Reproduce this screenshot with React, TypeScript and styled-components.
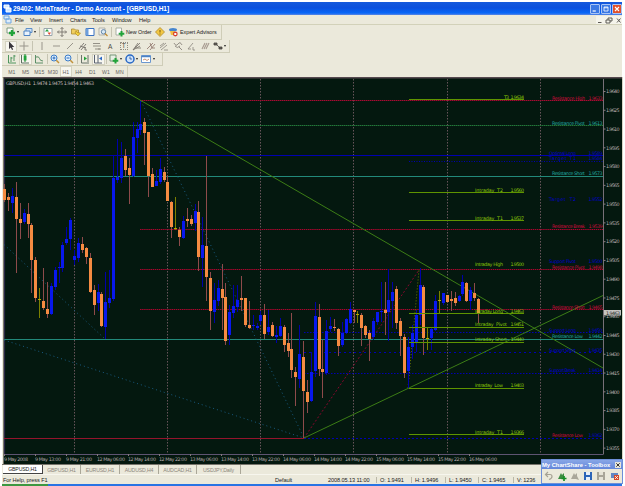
import React from 'react'
import { createGlobalStyle, styled } from 'styled-components';

type Candle = [number, number, number, number, number, 'u' | 'd' | 'y'];

// x, high, body top, body bottom, low, kind
const candles: Candle[] = [
    [4.5, 184, 189, 200, 202, 'd'], [8.5, 193, 197, 200, 211, 'd'], [12.5, 188, 196, 203, 213, 'u'], [16.5, 182, 197, 219, 273, 'd'],
    [20.5, 203, 219, 223, 239, 'd'], [24, 209, 213, 222, 224, 'u'], [28, 203, 214, 224, 238, 'd'], [31.5, 223, 225, 260, 293, 'd'],
    [35.5, 257, 260, 298, 302, 'd'], [39.5, 288, 299, 300, 318, 'y'], [43.5, 268, 301, 308, 310, 'd'], [47.5, 282, 309, 314, 318, 'd'],
    [51, 283, 286, 314, 315, 'u'], [55, 267, 270, 287, 290, 'u'], [59, 262, 267, 268, 283, 'u'], [62.5, 242, 245, 268, 272, 'u'],
    [66.5, 227, 239, 243, 245, 'u'], [70.5, 218, 220, 239, 250, 'u'], [74.5, 250, 256, 260, 265, 'u'], [78.5, 238, 243, 258, 262, 'u'],
    [82.5, 237, 244, 250, 253, 'd'], [86.5, 247, 248, 257, 264, 'd'], [90, 253, 258, 292, 293, 'd'], [94, 285, 290, 305, 315, 'd'],
    [98, 284, 292, 303, 311, 'u'], [101.5, 292, 294, 326, 327, 'd'], [105.5, 272, 302, 327, 339, 'u'], [109.5, 270, 298, 303, 308, 'u'],
    [113.5, 155, 178, 299, 301, 'u'], [117, 139, 177, 180, 183, 'u'], [121, 142, 158, 178, 183, 'u'], [125, 149, 156, 170, 176, 'd'],
    [129, 158, 168, 175, 204, 'd'], [133, 122, 137, 176, 177, 'u'], [137, 122, 129, 138, 153, 'u'], [140.5, 101, 124, 130, 135, 'u'],
    [144.5, 118, 122, 133, 165, 'd'], [148.5, 132, 132, 176, 197, 'd'], [152.5, 168, 174, 187, 187, 'd'], [156, 170, 181, 186, 186, 'u'],
    [160, 158, 169, 182, 184, 'u'], [164, 167, 172, 180, 182, 'd'], [167.5, 175, 182, 201, 201, 'd'], [171.5, 201, 202, 227, 238, 'd'],
    [175.5, 197, 228, 229, 230, 'y'], [179.5, 227, 230, 237, 246, 'd'], [183, 216, 221, 238, 239, 'u'], [187, 208, 219, 221, 227, 'd'],
    [191, 215, 219, 224, 226, 'd'], [195, 204, 211, 223, 231, 'u'], [198.5, 201, 212, 257, 271, 'd'], [202.5, 217, 245, 258, 287, 'u'],
    [206.5, 156, 246, 277, 301, 'd'], [210.5, 272, 278, 311, 330, 'd'], [214, 283, 300, 312, 323, 'u'], [218, 280, 288, 301, 306, 'u'],
    [222, 264, 289, 298, 330, 'd'], [225.5, 283, 297, 341, 345, 'd'], [229.5, 305, 312, 335, 345, 'u'], [233.5, 285, 306, 313, 318, 'u'],
    [237.5, 285, 300, 307, 312, 'u'], [241.5, 276, 298, 300, 311, 'd'], [245.5, 298, 298, 325, 327, 'd'], [249, 301, 325, 328, 329, 'd'],
    [253, 315, 325, 326, 330, 'u'], [257, 323, 326, 328, 330, 'u'], [260.5, 311, 315, 321, 325, 'u'], [264.5, 304, 315, 334, 339, 'd'],
    [268.5, 310, 327, 332, 335, 'u'], [272.5, 322, 325, 336, 337, 'd'], [276, 326, 335, 337, 343, 'u'], [280, 318, 326, 336, 337, 'u'],
    [284, 325, 327, 345, 352, 'd'], [288, 333, 343, 351, 357, 'd'], [291.5, 313, 349, 370, 378, 'd'], [295.5, 367, 372, 377, 406, 'd'],
    [299.5, 325, 354, 379, 388, 'u'], [303.5, 341, 357, 391, 438, 'd'], [307.5, 380, 392, 402, 413, 'd'], [311, 352, 372, 401, 402, 'u'],
    [315, 302, 316, 371, 377, 'u'], [319, 304, 317, 369, 376, 'd'], [322.5, 340, 369, 372, 398, 'd'], [326.5, 320, 331, 373, 375, 'u'],
    [330.5, 317, 326, 329, 332, 'u'], [334.5, 319, 327, 328, 331, 'd'], [338.5, 328, 329, 346, 356, 'd'], [342.5, 322, 333, 345, 347, 'u'],
    [346, 318, 319, 333, 334, 'u'], [350, 302, 309, 323, 324, 'u'], [354, 310, 310, 312, 323, 'd'], [357.5, 311, 314, 315, 323, 'y'],
    [361.5, 313, 315, 328, 346, 'd'], [365.5, 325, 326, 335, 338, 'd'], [369.5, 330, 333, 339, 361, 'd'], [373.5, 318, 321, 337, 340, 'u'],
    [377.5, 312, 312, 322, 325, 'u'], [381.5, 282, 311, 312, 322, 'u'], [385, 282, 310, 313, 335, 'd'], [388.5, 269, 300, 312, 341, 'u'],
    [392.5, 282, 292, 301, 328, 'u'], [396.5, 286, 289, 323, 329, 'd'], [400.5, 318, 321, 336, 356, 'd'], [404.5, 334, 337, 373, 378, 'd'],
    [408.5, 337, 347, 371, 388, 'u'], [412.5, 325, 333, 347, 359, 'u'], [416.5, 310, 315, 342, 352, 'u'], [420, 268, 285, 315, 325, 'u'],
    [423.5, 285, 287, 338, 355, 'd'], [427.5, 327, 338, 339, 350, 'y'], [431.5, 328, 329, 338, 350, 'u'], [435.5, 295, 301, 330, 331, 'u'],
    [439.5, 291, 300, 301, 313, 'y'], [443, 293, 293, 303, 305, 'u'], [447, 295, 295, 302, 303, 'd'], [451, 291, 299, 301, 311, 'd'],
    [455, 292, 298, 303, 306, 'd'], [459, 295, 296, 301, 302, 'u'], [462.5, 275, 282, 294, 296, 'u'], [466.5, 282, 283, 301, 302, 'd'],
    [470.5, 287, 290, 301, 310, 'u'], [474.5, 283, 293, 298, 301, 'd'], [478.5, 298, 299, 314, 323, 'd'],
];

const wickColor = { u: '#0000a8', d: '#8e4b4b', y: '#7c8000' };
const bodyColor = { u: '#0818ee', d: '#f58b42', y: '#b8a800' };

const gridX = [74.5, 167.5, 260.5, 353.5, 447.5, 540.5];

// y, x start, colour, dash
const levels: [number, number, string, string][] = [
    [100.5, 140, '#a80a32', '1.5 .5'],
    [125.5, 4, '#23783a', '1.5 .5'],
    [155.5, 4, '#0000b0', ''],
    [161.5, 409, '#0000b4', '1 1.5'],
    [176.5, 4, '#22897a', ''],
    [229.5, 140, '#a8062e', '1.5 .6'],
    [269.5, 140, '#a8062e', '1.5 .6'],
    [309.5, 140, '#a8062e', '1.5 .6'],
    [332.5, 304, '#0000b4', '1.5 1.5'],
    [339.5, 4, '#22897a', ''],
    [352.5, 304, '#0000b4', '2 3'],
    [373.5, 304, '#0000b4', '1.5 1.5'],
    [438.5, 304, '#0000b4', '2 2'],
];

const intraday: [string, string, number, number][] = [
    ['T3', '1.9634', 99, 99.5],
    ['Intraday  T2', '1.9560', 191.5, 192.5],
    ['Intraday  T1', '1.9537', 220, 220.5],
    ['Intraday High', '1.9500', 266, 0],
    ['Intraday Long', '1.9463', 312.6, 313.5],
    ['Intraday  Pivot', '1.9451', 326.4, 327.5],
    ['Intraday Short', '1.9440', 341, 342.5],
    ['Intraday  Low', '1.9403', 387.3, 388.5],
    ['Intraday  T1', '1.9366', 433.6, 434.5],
];

const RED = '#c80a3a';
const TEAL = '#20a6a0';
const BLUE = '#0000c8';

const notes: [string, string, number, string][] = [
    ['Optimal Long', '1.9589', 154.6, BLUE],
    ['Target T1', '1.9584', 160.3, BLUE],
    ['Target  T2', '1.9552', 201, BLUE],
    ['Support Pivot', '1.9500', 263, BLUE],
    ['Support Long', '1.9450', 332, BLUE],
    ['Support Short', '1.9435', 352, BLUE],
    ['Support Break', '1.9414', 372.3, BLUE],
    ['', '1.9362', 437.3, BLUE],
    ['Resistance High', '1.9633', 99.8, RED],
    ['Resistance Pivot', '1.9613', 125, TEAL],
    ['Resistance Short', '1.9573', 175.3, TEAL],
    ['Resistance Break', '1.9539', 228.4, RED],
    ['Resistance Pivot', '1.9498', 268.5, RED],
    ['Resistance Short', '1.9465', 308.6, RED],
    ['Resistance Low', '1.9442', 338, TEAL],
    ['Resistance Low', '', 437, RED],
];

const dates = ['9 May 2008', '9 May 13:00', '9 May 21:00', '12 May 06:00', '12 May 14:00', '12 May 22:00', '13 May 06:00', '13 May 14:00',
    '13 May 22:00', '14 May 06:00', '14 May 14:00', '14 May 22:00', '15 May 06:00', '15 May 14:00', '15 May 22:00', '16 May 06:00'];

const prices = Array.from({ length: 20 }, (_, i) => ({ y: 91.5 + i * 18.77, text: (1.964 - i * 0.0015).toFixed(4) }));

const Chart = () => (
    <ChartSvg viewBox="3 77 620 387" width="620" height="387">
        <rect x="3" y="77" width="620" height="387" fill="#04180f" />
        <path d="M3 77.5H622" stroke="#55494f" strokeWidth="2" />
        <path d="M3.5 77V464" stroke="#77756b" />
        <path d="M4.6 79V454" stroke="#302c4e" />
        <path d="M622.5 77V464" stroke="#d8d6c6" />
        {gridX.map(x => <path key={x} d={`M${x} 79V454`} stroke="#67545a" strokeDasharray="1.5 1.5" />)}
        {levels.map(([y, x, color, dash]) => (
            <path key={y} d={`M${x} ${y}H603`} stroke={color} strokeDasharray={dash || undefined} />
        ))}
        <path d="M4 438.5H304" stroke="#94142c" />
        <path d="M4 244.5L105 339M4 340L304 438M141 101L304 438" stroke="#185a80" strokeDasharray="1 3" fill="none" />
        <path d="M304 438L419 270" stroke="#84082c" strokeDasharray="2 2" />
        <path d="M408 388L419 270" stroke="#6c7a00" strokeDasharray="1 2" />
        <path d="M102 78L603 368M304 438L603 295.5" stroke="#3c7d16" fill="none" />
        {candles.map(([x, high, top, bottom, low, kind]) => {
            const left = Math.floor(x);
            return (
                <g key={x} shapeRendering="crispEdges">
                    <rect x={left} y={high} width="1" height={low - high} fill={wickColor[kind]} />
                    <rect x={left - 1} y={top} width="3" height={Math.max(1, bottom - top)} fill={bodyColor[kind]} />
                </g>
            );
        })}
        {intraday.map(([name, value, y, line]) => (
            <g key={y}>
                {line > 0 && <path d={`M409 ${line}H524`} stroke="#5f9400" />}
                <ChartText x={name === 'T3' ? 504 : 475} y={y} $color="#8cc808" textLength={name === 'T3' ? 5 : name.length > 13 ? 32 : 28}>{name}</ChartText>
                <ChartText x="510.5" y={y} $color="#8cc808" textLength="13.5">{value}</ChartText>
            </g>
        ))}
        {notes.map(([name, value, y, color]) => (
            <g key={y}>
                {name && <ChartText x={color === BLUE ? 549 : 552} y={y} $color={color} textLength={color === BLUE ? 27 : name.length > 14 ? 33 : 31}>{name}</ChartText>}
                {value && <ChartText x="588.5" y={y} $color={color} textLength="14">{value}</ChartText>}
            </g>
        ))}
        <path d="M603.5 79V454.5" stroke="#777078" />
        <path d="M4 454.5H603" stroke="#5e5472" />
        {prices.map(({ y, text }) => (
            <g key={text}>
                <path d={`M603 ${y}h2.5`} stroke="#85797c" />
                <ChartText x="606" y={y + 1.7} $color="#bdb2b2" textLength="13.5">{text}</ChartText>
            </g>
        ))}
        <rect x="604" y="310" width="17" height="5.5" fill="#c6c4c0" />
        <ChartText x="606" y="314.5" $color="#201c1c" textLength="14">1.9463</ChartText>
        {dates.map((date, i) => (
            <g key={date}>
                <path d={`M${4.5 + i * 31} 454v2`} stroke="#85797c" />
                <ChartText x={4 + i * 31} y="461" $color="#b4aaaa" textLength={i === 0 ? 24 : i < 3 ? 26 : 28}>{date}</ChartText>
            </g>
        ))}
        <ChartText x="6" y="84.5" $color="#c4babc" textLength="88">GBPUSD,H1  1.9474 1.9475 1.9454 1.9463</ChartText>
    </ChartSvg>
);

const art: Record<string, React.ReactNode> = {
    newChart: <><path d="M1 1h6v5H1z" fill="#fff" stroke="#7c9a80" /><path d="M6 3v6M3 6h6" stroke="#22a33a" strokeWidth="2.4" /></>,
    profiles: <><path d="M3 1.5h6v4H3z" fill="#cfe1f5" stroke="#5f90c8" /><path d="M1 4h6v4.5H1z" fill="#e8f2fc" stroke="#4d83c4" /></>,
    market: <><path d="M1 1.5h8v7H1z" fill="#fff" stroke="#9aa6ac" /><path d="M2 4.5l2-2.5 2 2.5z" fill="#2aa040" /><path d="M4.5 5.5H8L6.300 8z" fill="#e04c30" /></>,
    move: <path d="M5 .5v9M.5 5h9M3.5 2L5 .5 6.5 2M3.5 8L5 9.5 6.5 8M2 3.5L.5 5 2 6.5M8 3.5L9.5 5 8 6.5" stroke="#77736b" strokeWidth=".9" fill="none" />,
    folder: <><path d="M.5 2h3l1 1h3v4h-7z" fill="#f0cf60" stroke="#ac8a30" strokeWidth=".8" /><path d="M5 4l1.2 1.5L9.5 6 7 9 4 6z" fill="#f4d33c" stroke="#a88120" strokeWidth=".6" /></>,
    terminal: <><path d="M1 1.5h8v7H1z" fill="#fff" stroke="#3871c2" /><path d="M1 1.5h2.5v7H1z" fill="#6d9edb" /></>,
    tester: <><path d="M1 1h6v7H1z" fill="#eee" stroke="#a5a49c" strokeWidth=".8" /><circle cx="5.5" cy="4.8" r="2.2" fill="#d7e8f6" stroke="#6488a8" /><path d="M7 6.5L9.5 9" stroke="#c48b30" strokeWidth="1.2" /></>,
    order: <><path d="M1 1h5.5v7H1z" fill="#fff" stroke="#979f93" strokeWidth=".8" /><path d="M6.5 4v5.5M3.7 6.8h5.6" stroke="#22a33a" strokeWidth="2" /></>,
    meta: <><path d="M5 .5L9.5 5 5 9.5.5 5z" fill="#f3c843" stroke="#b08a2c" strokeWidth=".8" /><path d="M5 3v2.5M5 6.5v1" stroke="#775708" /></>,
    expert: <><ellipse cx="5" cy="2.7" rx="4" ry="1.7" fill="#4585cf" /><path d="M2 4h5l-1 4H3z" fill="#f1bf45" /><circle cx="7.3" cy="7" r="2.4" fill="#d8402c" /><path d="M6.3 6h2v2h-2z" fill="#fff" /></>,
    cursor: <path d="M3 .5v7.5l1.8-1.6L6 9l1.2-.6L6 6h2.3z" fill="#39363c" />,
    cross: <path d="M5 .5v9M.5 5h9" stroke="#99958b" />,
    vline: <path d="M5 1v8" stroke="#99958b" />,
    hline: <path d="M1 5h7" stroke="#99958b" />,
    trend: <path d="M2 8L8 2" stroke="#99958b" />,
    channel: <path d="M1 8l5-6M3 9l5-6M2 5l6 2M7 6v3h2" stroke="#76726c" strokeWidth=".9" fill="none" />,
    fibo: <path d="M1 2.5h7M1 5h8M3 8h6M7 7v2" stroke="#8a867c" strokeWidth=".9" />,
    fan: <path d="M1 9L8 2M1 9l7-4M1 9l5-7M4 7h5" stroke="#807b73" strokeWidth=".9" />,
    pitch: <path d="M1 8l6-6M4 9l5-6M4 2l2 5h3" stroke="#8b6f66" strokeWidth=".8" fill="none" />,
    lines: <path d="M1 5l4-3M1 7l6-5M2 9l6-5M5 9h4" stroke="#8a857d" strokeWidth=".8" />,
    arcs: <path d="M1 2q2 4 4 1t4 1M2 5q2 3 5 0M6 6l3 3" stroke="#8a857d" strokeWidth=".9" fill="none" />,
    angle: <path d="M2 8l5-6M2 8h3M7 6v3h2" stroke="#8a857d" strokeWidth=".8" fill="none" />,
    para: <path d="M2 8l3-6M4 8l3-6M6 8l3-6" stroke="#a69a8f" strokeWidth="1.1" />,
    arrows: <path d="M1 2h3v2H1zM4 4l3 3M6 6h3v2H6z" stroke="#45413d" strokeWidth=".8" fill="#66615c" />,
    bars: <path d="M1.5 1v8H9M4 3v5M4 4h1.5M7 1v6M7 2h1.5" stroke="#3c8d50" strokeWidth=".9" fill="none" />,
    candle: <><path d="M1.5 1v8H9" stroke="#5c7260" fill="none" /><path d="M5 0v8" stroke="#1d8a34" /><path d="M3.7 1.5h2.8v5H3.7z" fill="#22a33a" /></>,
    lineChart: <path d="M1.5 1v8H9M2 3q3-1 3.5 1.5T9 7" stroke="#4b8559" strokeWidth=".9" fill="none" />,
    zoomIn: <><circle cx="4" cy="4" r="3" fill="#dceeff" stroke="#3a7cc8" /><path d="M2.5 4h3M4 2.5v3" stroke="#2869b8" /><path d="M6.3 6.3L9 9" stroke="#c0913a" strokeWidth="1.5" /></>,
    zoomOut: <><circle cx="4" cy="4" r="3" fill="#dceeff" stroke="#3a7cc8" /><path d="M2.5 4h3" stroke="#2869b8" /><path d="M6.3 6.3L9 9" stroke="#c0913a" strokeWidth="1.5" /></>,
    scroll: <><path d="M1.5 1v8H9M8 1v7" stroke="#69756b" fill="none" /><path d="M4 2.5L7 4.5 4 6.5z" fill="#22a33a" /></>,
    shift: <><path d="M1.5 1v8H9M5 1v8" stroke="#58606f" fill="none" /><path d="M9 2.5L6 4.5 9 6.5z" fill="#2d69c4" /></>,
    indicators: <><path d="M1 1h6v6H1z" fill="#e8f0e4" stroke="#779578" /><path d="M6.5 4v5.5M3.7 6.8h5.6" stroke="#22a33a" strokeWidth="2" /></>,
    clock: <><circle cx="5" cy="5" r="4" fill="#cfe3fa" stroke="#2868c4" strokeWidth="1.5" /><path d="M5 2.5V5h2" stroke="#214e94" fill="none" strokeWidth=".8" /></>,
    template: <><path d="M.5 1.5h9v7h-9z" fill="#fff" stroke="#6b97cf" /><path d="M.5 2.5h9" stroke="#4d83c4" strokeWidth="1.5" /><path d="M2 6l2-1 2 1.5L8 5" stroke="#bc7850" strokeWidth=".8" fill="none" /></>,
    undo: <path d="M2 3.5h4q2 0 2 2T5 8.5M4 1L1.5 3.5 4 6" stroke="#a6a294" strokeWidth="1.2" fill="none" />,
    share: <><path d="M1 8L4 2l1 2 2-2v6z" fill="#3d8d42" /><path d="M7 5v5M4.5 7.5h5" stroke="#178e27" strokeWidth="1.7" /></>,
    shareOff: <path d="M1 8L4 2l1 2 2-2v3l2 4-3-1z" fill="#aaa79a" />,
    save: <><path d="M1 1h8v8H1z" fill="#2c65b8" /><path d="M3 1h4v3H3zM3 6h4v3H3z" fill="#e8f0fa" /></>,
    saveOff: <><path d="M1 1h8v8H1z" fill="#a8a598" /><path d="M3 1h4v3H3zM3 6h4v3H3z" fill="#e5e3d6" /></>,
    remove: <><path d="M1 2h7v5H1z" fill="#6288c4" /><path d="M4 4h5v5H4z" fill="#d64b2c" /><path d="M5 5l3 3M8 5L5 8" stroke="#fff" strokeWidth=".8" /></>,
};

const Icon = ({ name }: { name: string }) => <svg width="10" height="10" viewBox="0 0 10 10">{art[name]}</svg>;

const Tool = ({ icon, w = 13.5, pressed }: { icon: string; w?: number; pressed?: boolean }) => (
    <Slot $w={w} $pressed={pressed}><Icon name={icon} /></Slot>
);

const App = () => (
    <Window>
        <GlobalStyle />
        <TitleBar>
            <AppIcon viewBox="0 0 9 9"><path d="M1 1h5v3H1zM3 4h5v4H3z" fill="#cfe6ff" stroke="#fff" /></AppIcon>
            <TitleText>29402: MetaTrader - Demo Account - [GBPUSD,H1]</TitleText>
            <WindowButton><svg viewBox="0 0 10 10"><path d="M2 7.5h4" stroke="#fff" strokeWidth="1.5" /></svg></WindowButton>
            <WindowButton><svg viewBox="0 0 10 10"><path d="M2.5 2.5h5v5h-5zM2.5 3.5h5" stroke="#fff" fill="none" /></svg></WindowButton>
            <WindowButton $close><svg viewBox="0 0 10 10"><path d="M2.5 2.5l5 5M7.5 2.5l-5 5" stroke="#fff" strokeWidth="1.4" /></svg></WindowButton>
        </TitleBar>
        <MenuBar>
            <AppIcon viewBox="0 0 9 9"><path d="M1 1h5v3H1zM3 4h5v4H3z" fill="#dfedfa" stroke="#6fa5df" /></AppIcon>
            <MenuItem $w={15}>File</MenuItem>
            <MenuItem $w={19}>View</MenuItem>
            <MenuItem $w={21}>Insert</MenuItem>
            <MenuItem $w={22}>Charts</MenuItem>
            <MenuItem $w={20}>Tools</MenuItem>
            <MenuItem $w={27}>Window</MenuItem>
            <MenuItem $w={20}>Help</MenuItem>
            <ChildControls viewBox="0 0 26 8">
                <path d="M2 6.5h3.5M10 4h4v3h-4zM12 4V2h4v3h-2M21 2.5l3.500 4M24.500 2.5l-3.500 4" stroke="#5d5a55" fill="none" />
            </ChildControls>
        </MenuBar>
        <ToolRow $h={15} $w={220}>
            <Tool icon="newChart" w={12} /><Caret />
            <Tool icon="profiles" w={13} /><Caret />
            <Divider />
            <Tool icon="market" w={14} />
            <Tool icon="move" w={14} />
            <Tool icon="folder" w={14} />
            <Tool icon="terminal" w={13} />
            <Tool icon="tester" w={14} />
            <Divider />
            <Tool icon="order" w={13} />
            <Label $w={28}>New Order</Label>
            <Tool icon="meta" w={12} />
            <Tool icon="expert" w={14} />
            <Label $w={38}>Expert Advisors</Label>
        </ToolRow>
        <ToolRow $h={13} $w={228}>
            <Tool icon="cursor" w={12} pressed />
            <Tool icon="cross" w={14} />
            <Divider />
            <Tool icon="vline" w={16} />
            <Tool icon="hline" w={13} />
            <Tool icon="trend" />
            <Tool icon="channel" />
            <Tool icon="fibo" />
            <Slot $w={13.5} $dark>A</Slot>
            <Slot $w={13.5} $dark><Boxed>T</Boxed></Slot>
            <Tool icon="fan" />
            <Tool icon="pitch" />
            <Tool icon="lines" />
            <Tool icon="arcs" />
            <Tool icon="angle" />
            <Tool icon="para" />
            <Tool icon="arrows" w={12} /><Caret />
        </ToolRow>
        <ToolRow $h={13} $w={161}>
            <Tool icon="bars" />
            <Tool icon="candle" w={13} pressed />
            <Tool icon="lineChart" w={14} />
            <Divider />
            <Tool icon="zoomIn" w={13} />
            <Tool icon="zoomOut" w={14} />
            <Divider />
            <Tool icon="scroll" w={13} />
            <Tool icon="shift" w={13} pressed />
            <Divider />
            <Tool icon="indicators" w={12} /><Caret />
            <Tool icon="clock" w={12} /><Caret />
            <Tool icon="template" w={13} /><Caret />
        </ToolRow>
        <ToolRow $h={12} $w={126}>
            {['M1', 'M5', 'M15', 'M30', 'H1', 'H4', 'D1', 'W1', 'MN'].map(period => (
                <Slot key={period} $w={period === 'H1' ? 12 : 13.7} $pressed={period === 'H1'}>{period}</Slot>
            ))}
        </ToolRow>
        <Chart />
        <Tabs>
            <Tab $w={40} $active>GBPUSD,H1</Tab>
            <Tab $w={38}>GBPUSD,H1</Tab>
            <Tab $w={39}>EURUSD,H1</Tab>
            <Tab $w={39}>AUDUSD,H4</Tab>
            <Tab $w={38}>AUDCAD,H1</Tab>
            <Tab $w={44}>USDJPY,Daily</Tab>
        </Tabs>
        <StatusBar>
            <StatusItem $w={272}>For Help, press F1</StatusItem>
            <StatusItem $w={53}>Default</StatusItem>
            <StatusItem $w={49}>2008.05.13 11:00</StatusItem>
            <StatusItem $w={35} $line>O: 1.9491</StatusItem>
            <StatusItem $w={34} $line>H: 1.9496</StatusItem>
            <StatusItem $w={33} $line>L: 1.9450</StatusItem>
            <StatusItem $w={35} $line>C: 1.9465</StatusItem>
            <StatusItem $w={30} $line>V: 1236</StatusItem>
        </StatusBar>
        <Taskbar />
        <Toolbox>
            <ToolboxTitle>
                <span>My ChartShare - Toolbox</span>
                <svg width="6" height="6" viewBox="0 0 6 6"><path d="M0 0h6v6H0z" fill="#e8e6da" /><path d="M1.3 1.3l3.4 3.4M4.7 1.3L1.3 4.7" stroke="#333" /></svg>
            </ToolboxTitle>
            <ToolboxBody>
                {['undo', 'share', 'shareOff', 'save', 'saveOff', 'remove'].map(name => <Tool key={name} icon={name} w={13.2} />)}
            </ToolboxBody>
        </Toolbox>
    </Window>
);

const GlobalStyle = createGlobalStyle`
    body {
        margin: 0;
        background: #fff;
        overflow: hidden;
    }

    * {
        box-sizing: border-box;
    }
`;

const Window = styled.div`
    position: relative;
    width: 625px;
    height: 486px;
    padding: 2px 2px 0 2px;
    display: flex;
    flex-direction: column;
    background: linear-gradient(#ebe9db, #ebe9db) 2px 2px / 620px 484px no-repeat #fff;
    font-family: "Liberation Sans", sans-serif;
    font-size: 5.6px;
    color: #222;
    white-space: nowrap;
`;

const TitleBar = styled.div`
    width: 620px;
    height: 13px;
    flex: none;
    display: flex;
    align-items: center;
    gap: 1px;
    padding: 0 0 0 1px;
    background: linear-gradient(#1559dc 0%, #0b50de 45%, #0667f8 85%, #5d86e2 100%);
`;

const AppIcon = styled.svg`
    width: 9px;
    height: 9px;
    flex: none;
`;

const TitleText = styled.div`
    flex: 1;
    color: #fff;
    font-size: 6.6px;
    font-weight: 700;
    letter-spacing: -0.05px;
`;

const WindowButton = styled.div<{ $close?: boolean }>`
    width: 10px;
    height: 10px;
    display: flex;
    border: 1px solid #a9c5f5;
    border-radius: 1px;
    background: ${({ $close }) => ($close ? '#e0512c' : '#3b78e4')};

    svg {
        width: 100%;
    }
`;

const MenuBar = styled.div`
    width: 620px;
    height: 10px;
    flex: none;
    display: flex;
    align-items: center;
    padding-left: 1px;
    border-bottom: 1px solid #d2d1b9;
`;

const MenuItem = styled.div<{ $w: number }>`
    width: ${({ $w }) => $w}px;
    padding-left: 3px;
    font-size: 5.7px;
    letter-spacing: -0.1px;
`;

const ChildControls = styled.svg`
    width: 26px;
    height: 8px;
    margin-left: auto;
    background: #f5f4eb;
`;

const ToolRow = styled.div<{ $h: number; $w: number }>`
    width: ${({ $w }) => $w}px;
    height: ${({ $h }) => $h}px;
    flex: none;
    display: flex;
    align-items: center;
    padding-left: 3px;
    border-right: 1px solid #cfcdb8;
    border-bottom: 1px solid #cfcdb8;
`;

const Slot = styled.div<{ $w: number; $pressed?: boolean; $dark?: boolean }>`
    width: ${({ $w }) => $w}px;
    height: 11px;
    flex: none;
    display: flex;
    align-items: center;
    justify-content: center;
    font-size: ${({ $dark }) => ($dark ? 6.5 : 5.2)}px;
    color: ${({ $dark }) => ($dark ? '#4c4945' : '#69655f')};
    ${({ $pressed }) => $pressed && 'background: #f7f6ef; box-shadow: inset 0 0 0 1px #d4d2c1;'}
`;

const Boxed = styled.div`
    padding: 0 1px;
    border: 1px dotted #918d82;
    line-height: 6px;
`;

const Caret = styled.div`
    width: 0;
    height: 0;
    margin: 0 2px 0 0;
    border: 1.5px solid transparent;
    border-top: 2px solid #222;
    border-bottom: 0;
`;

const Divider = styled.div`
    width: 1px;
    height: 10px;
    margin: 0 1px;
    background: #c6c4b2;
`;

const Label = styled.div<{ $w: number }>`
    width: ${({ $w }) => $w}px;
    font-size: 5.4px;
    letter-spacing: -0.05px;
`;

const ChartSvg = styled.svg`
    margin: -1px 0 0 1px;
    display: block;
    flex: none;
`;

const ChartText = styled.text<{ $color: string }>`
    font-family: "DejaVu Sans", sans-serif;
    font-size: 4.8px;
    white-space: pre;
    fill: ${({ $color }) => $color};
`;

const Tabs = styled.div`
    height: 10px;
    flex: none;
    display: flex;
    padding-left: 1px;
    border-top: 1px solid #77746c;
`;

const Tab = styled.div<{ $w: number; $active?: boolean }>`
    width: ${({ $w }) => $w}px;
    height: 9px;
    display: flex;
    align-items: center;
    justify-content: center;
    font-size: 5.2px;
    letter-spacing: -0.15px;
    color: ${({ $active }) => ($active ? '#222' : '#8b877c')};
    background: ${({ $active }) => ($active ? '#fff' : 'none')};
    border-right: 1px solid ${({ $active }) => ($active ? '#444' : '#aaa798')};
    border-bottom: ${({ $active }) => ($active ? '1px solid #444' : 'none')};
`;

const StatusBar = styled.div`
    height: 10px;
    flex: none;
    display: flex;
    align-items: center;
    border-top: 1px solid #f7f6ee;
    letter-spacing: -0.1px;
`;

const StatusItem = styled.div<{ $w: number; $line?: boolean }>`
    width: ${({ $w }) => $w}px;
    flex: none;
    padding-left: ${({ $line }) => ($line ? 3 : 1)}px;
    border-left: ${({ $line }) => ($line ? '1px solid #bab8a8' : 'none')};
`;

const Taskbar = styled.div`
    width: 620px;
    height: 2px;
    background: linear-gradient(90deg, #3d9741 46px, #2874e4 46px);
`;

const Toolbox = styled.div`
    position: absolute;
    left: 541px;
    top: 459px;
    width: 82px;
    height: 25px;
    border: 1px solid #6d8fd8;
    background: #ebe9db;
`;

const ToolboxTitle = styled.div`
    height: 9px;
    display: flex;
    align-items: center;
    justify-content: space-between;
    padding: 0 1px 0 0;
    background: linear-gradient(#88a6e6, #6487da);
    color: #fff;
    font-size: 5.8px;
    font-weight: 700;
`;

const ToolboxBody = styled.div`
    height: 14px;
    display: flex;
    align-items: center;
`;

export default App;
